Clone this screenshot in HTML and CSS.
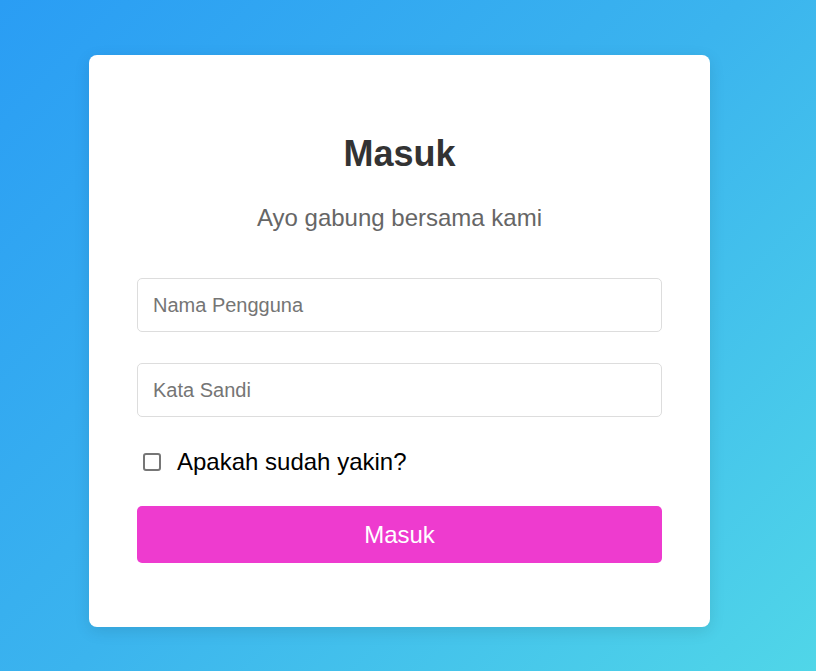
FILE: index.html
```html
<!DOCTYPE html>
<html lang="id">
<head>
<meta charset="utf-8">
<title>Masuk</title>
<link rel="stylesheet" href="styles.css">
</head>
<body>
<main class="card">
  <h1 class="title">Masuk</h1>
  <p class="subtitle">Ayo gabung bersama kami</p>
  <form class="form">
    <input class="field" type="text" placeholder="Nama Pengguna">
    <input class="field" type="password" placeholder="Kata Sandi">
    <label class="check">
      <input class="check-box" type="checkbox">
      <span>Apakah sudah yakin?</span>
    </label>
    <button class="btn" type="button">Masuk</button>
  </form>
</main>
</body>
</html>
```
FILE: styles.css
```css
html, body {
  margin: 0;
  height: 100%;
}
body {
  font-family: "Liberation Sans", Arial, sans-serif;
  background: linear-gradient(135deg, #2a9df4 0%, #3bb4ee 50%, #50d6e8 100%);
  padding: 55px 0 0 89px;
  box-sizing: border-box;
  overflow: hidden;
}
.card {
  width: 621px;
  box-sizing: border-box;
  background: #fff;
  border-radius: 8px;
  box-shadow: 0 4px 16px rgba(0, 0, 0, 0.1);
  padding: 78px 48px 64px;
}
.title {
  margin: 0;
  text-align: center;
  font-size: 36px;
  font-weight: bold;
  color: #333;
  line-height: 41px;
}
.subtitle {
  margin: 30px 0 0;
  text-align: center;
  font-size: 24px;
  color: #666;
  line-height: 28px;
}
.form {
  display: flex;
  flex-direction: column;
  margin-top: 46px;
}
.field {
  height: 54px;
  box-sizing: border-box;
  border: 1px solid #ddd;
  border-radius: 5px;
  padding: 0 15px;
  font-family: "Liberation Sans", Arial, sans-serif;
  font-size: 20px;
  color: #333;
  outline: none;
  margin-bottom: 31px;
}
.field::placeholder {
  color: #757575;
}
.check {
  display: flex;
  align-items: center;
  gap: 16px;
  font-size: 24px;
  color: #000;
  line-height: 28px;
  padding-left: 6px;
}
.check-box {
  appearance: none;
  -webkit-appearance: none;
  width: 18px;
  height: 18px;
  margin: 0;
  box-sizing: border-box;
  border: 2px solid #767676;
  border-radius: 3px;
  background: #fff;
}
.btn {
  margin-top: 30px;
  height: 57px;
  border: none;
  border-radius: 5px;
  background: #ee3bcf;
  color: #fff;
  font-family: inherit;
  font-size: 24px;
  cursor: pointer;
}
```
